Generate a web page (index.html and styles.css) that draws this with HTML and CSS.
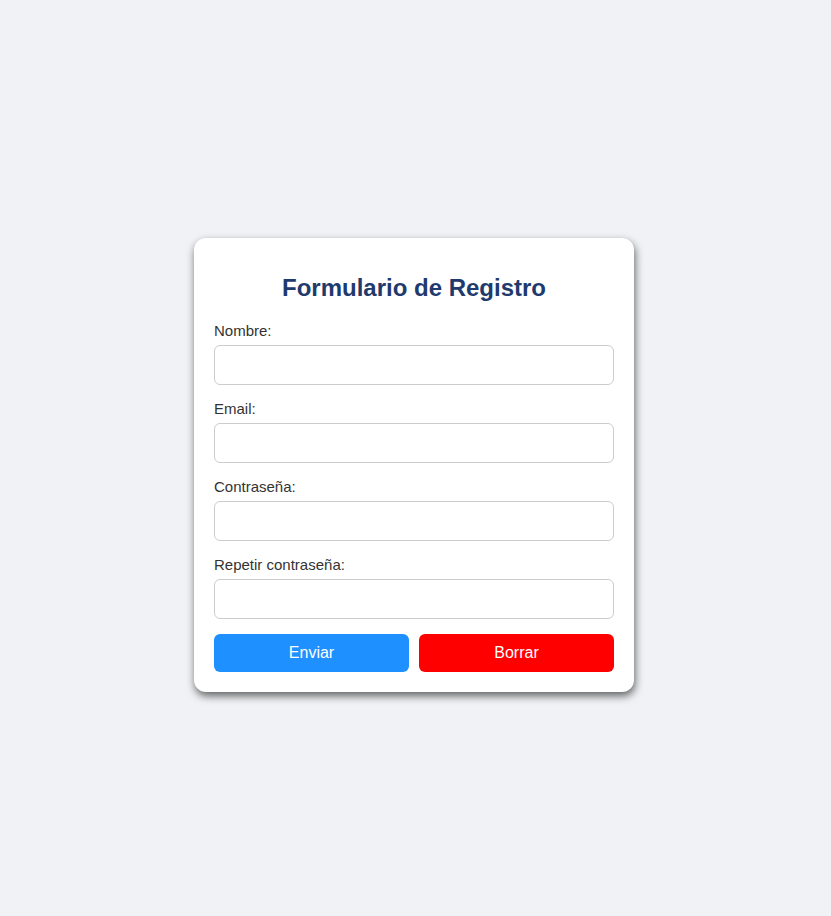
FILE: index.html
```html
<!DOCTYPE html>
<html lang="es">
<head>
<meta charset="utf-8">
<title>Formulario de Registro</title>
<link rel="stylesheet" href="styles.css">
</head>
<body>
<main class="page">
  <form class="card">
    <h2 class="title">Formulario de Registro</h2>
    <label class="label" for="nombre">Nombre:</label>
    <input class="input" id="nombre" type="text">
    <label class="label" for="email">Email:</label>
    <input class="input" id="email" type="email">
    <label class="label" for="pass">Contraseña:</label>
    <input class="input" id="pass" type="password">
    <label class="label" for="pass2">Repetir contraseña:</label>
    <input class="input" id="pass2" type="password">
    <div class="actions">
      <button class="btn btn-send" type="button">Enviar</button>
      <button class="btn btn-reset" type="button">Borrar</button>
    </div>
  </form>
</main>
</body>
</html>
```
FILE: styles.css
```css
* { box-sizing: border-box; }
html, body { margin: 0; padding: 0; }
body {
  background: #f0f2f5;
  font-family: "Liberation Sans", Arial, sans-serif;
  color: #333;
}
.page {
  height: 916px;
  padding: 14px 3px 0 0;
  display: flex;
  align-items: center;
  justify-content: center;
}
.card {
  width: 440px;
  background: #fff;
  border-radius: 12px;
  padding: 20px;
  box-shadow: 1px 4px 8px rgba(0, 0, 0, 0.6);
  display: flex;
  flex-direction: column;
}
.title {
  margin: 16px 0 20px;
  font-size: 24px;
  line-height: 28px;
  font-weight: bold;
  text-align: center;
  color: #1f3a6d;
}
.label {
  display: block;
  font-size: 15px;
  line-height: 17px;
  margin-bottom: 6px;
  color: #333;
}
.input {
  height: 40px;
  width: 100%;
  border: 1px solid #ccc;
  border-radius: 6px;
  margin: 0 0 15px;
  font-size: 15px;
  padding: 0 10px;
}
.actions {
  display: flex;
  gap: 10px;
}
.btn {
  flex: 1;
  height: 38px;
  border: none;
  border-radius: 6px;
  color: #fff;
  font-family: "Liberation Sans", Arial, sans-serif;
  font-size: 16px;
}
.btn-send { background: #1e90ff; }
.btn-reset { background: #ff0000; }
```
